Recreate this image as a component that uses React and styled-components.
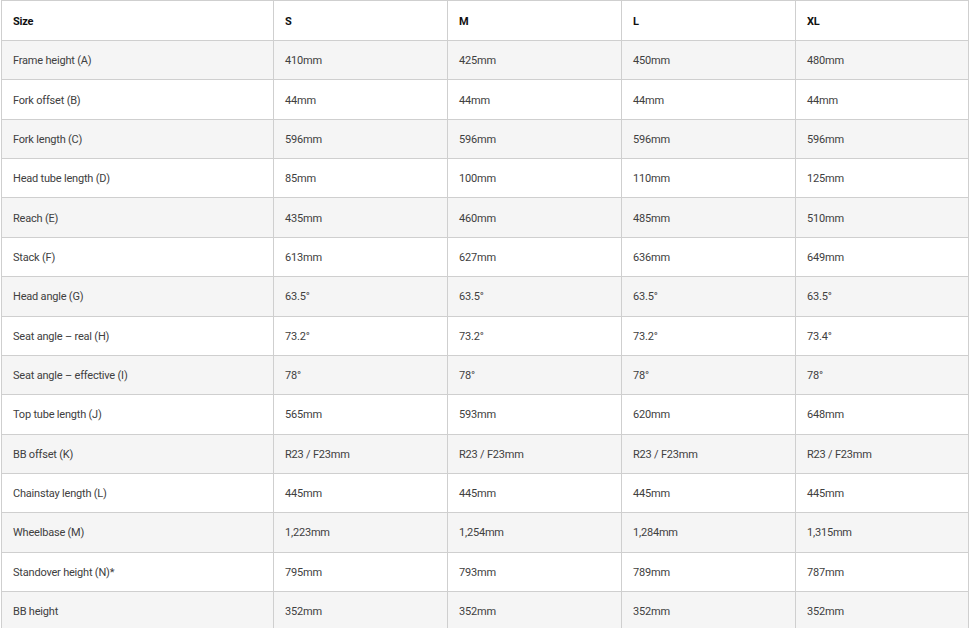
import React from "react";
import styled, { createGlobalStyle } from "styled-components";

const GlobalStyle = createGlobalStyle`
  html, body {
    margin: 0;
    padding: 0;
    background: #fff;
  }
  body {
    font-family: Roboto, "Liberation Sans", Arial, sans-serif;
  }
`;

const sizes = ["S", "M", "L", "XL"];

const rows = [
  ["Frame height (A)", "410mm", "425mm", "450mm", "480mm"],
  ["Fork offset (B)", "44mm", "44mm", "44mm", "44mm"],
  ["Fork length (C)", "596mm", "596mm", "596mm", "596mm"],
  ["Head tube length (D)", "85mm", "100mm", "110mm", "125mm"],
  ["Reach (E)", "435mm", "460mm", "485mm", "510mm"],
  ["Stack (F)", "613mm", "627mm", "636mm", "649mm"],
  ["Head angle (G)", "63.5°", "63.5°", "63.5°", "63.5°"],
  ["Seat angle – real (H)", "73.2°", "73.2°", "73.2°", "73.4°"],
  ["Seat angle – effective (I)", "78°", "78°", "78°", "78°"],
  ["Top tube length (J)", "565mm", "593mm", "620mm", "648mm"],
  ["BB offset (K)", "R23 / F23mm", "R23 / F23mm", "R23 / F23mm", "R23 / F23mm"],
  ["Chainstay length (L)", "445mm", "445mm", "445mm", "445mm"],
  ["Wheelbase (M)", "1,223mm", "1,254mm", "1,284mm", "1,315mm"],
  ["Standover height (N)*", "795mm", "793mm", "789mm", "787mm"],
  ["BB height", "352mm", "352mm", "352mm", "352mm"],
];

const Table = styled.div`
  display: grid;
  grid-template-columns: 272px 174px 174px 174px 173px;
  grid-template-rows: 40px;
  grid-auto-rows: 39.36px;
  width: 967px;
  margin-left: 1px;
  border-top: 1px solid #cfcfcf;
  border-left: 1px solid #cfcfcf;
`;

const Cell = styled.div`
  display: flex;
  align-items: center;
  padding-left: 11px;
  padding-top: 1px;
  border-right: 1px solid #cfcfcf;
  border-bottom: 1px solid #cfcfcf;
  background: ${(p) => (p.$striped ? "#f5f5f5" : "#fff")};
  color: ${(p) => (p.$head ? "#111" : "#404040")};
  font-size: 11px;
  font-weight: ${(p) => (p.$head ? 700 : 400)};
  letter-spacing: -0.2px;
  white-space: nowrap;
  box-sizing: border-box;
`;

const App = () => {
  return (
    <>
      <GlobalStyle />
      <Table>
        <Cell $head>Size</Cell>
        {sizes.map((s) => (
          <Cell $head key={s}>
            {s}
          </Cell>
        ))}
        {rows.map((row, i) =>
          row.map((val, j) => (
            <Cell key={`${i}-${j}`} $striped={i % 2 === 0}>
              {val}
            </Cell>
          ))
        )}
      </Table>
    </>
  );
};

export default App;
